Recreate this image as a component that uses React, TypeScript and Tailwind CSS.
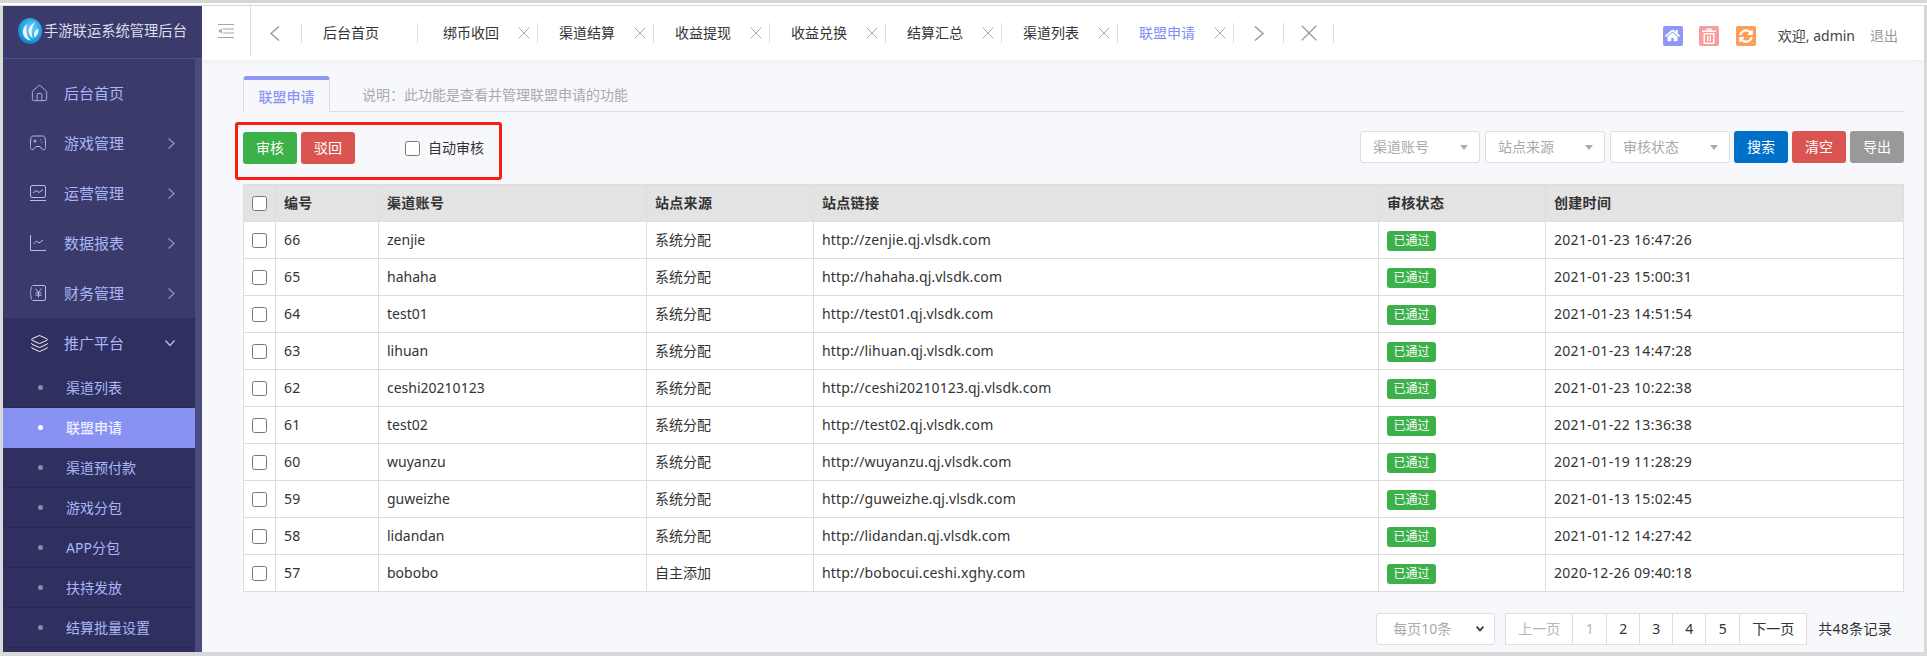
import React from "react";
import { House, Layers, X } from "lucide-react";
import { FaHome, FaSyncAlt } from "react-icons/fa";

const rows = [
  ["66", "zenjie", "系统分配", "http://zenjie.qj.vlsdk.com", "2021-01-23 16:47:26"],
  ["65", "hahaha", "系统分配", "http://hahaha.qj.vlsdk.com", "2021-01-23 15:00:31"],
  ["64", "test01", "系统分配", "http://test01.qj.vlsdk.com", "2021-01-23 14:51:54"],
  ["63", "lihuan", "系统分配", "http://lihuan.qj.vlsdk.com", "2021-01-23 14:47:28"],
  ["62", "ceshi20210123", "系统分配", "http://ceshi20210123.qj.vlsdk.com", "2021-01-23 10:22:38"],
  ["61", "test02", "系统分配", "http://test02.qj.vlsdk.com", "2021-01-22 13:36:38"],
  ["60", "wuyanzu", "系统分配", "http://wuyanzu.qj.vlsdk.com", "2021-01-19 11:28:29"],
  ["59", "guweizhe", "系统分配", "http://guweizhe.qj.vlsdk.com", "2021-01-13 15:02:45"],
  ["58", "lidandan", "系统分配", "http://lidandan.qj.vlsdk.com", "2021-01-12 14:27:42"],
  ["57", "bobobo", "自主添加", "http://bobocui.ceshi.xghy.com", "2020-12-26 09:40:18"],
];

function MonitorIcon() {
  return (
    <svg width="16" height="17" viewBox="0 0 16 17" fill="none" stroke="currentColor" strokeWidth="1">
      <rect x="0.5" y="0.5" width="15" height="12" rx="1.5" />
      <path d="M3 8 L6 5.5 L9 7.5 L13 4.5" />
      <path d="M0 15.5 H16" />
    </svg>
  );
}

function ChartIcon() {
  return (
    <svg width="16" height="16" viewBox="0 0 16 16" fill="none" stroke="currentColor" strokeWidth="1">
      <path d="M0.5 0 V15.5 H16" />
      <path d="M3.5 9 L6.5 6 L9 8 L13 5" />
    </svg>
  );
}

function YuanIcon() {
  return (
    <svg width="16" height="16" viewBox="0 0 16 16" fill="none" stroke="currentColor" strokeWidth="1">
      <path d="M2.5 0.5 H14 A1.5 1.5 0 0 1 15.5 2 V14 A1.5 1.5 0 0 1 14 15.5 H2.5" />
      <path d="M2 1.5 C0.8 1.5 1.2 7 0 8 C1.2 9 0.8 14.5 2 14.5" />
      <path d="M5.5 3.5 L8.5 7.5 L11.5 3.5 M8.5 7.5 V12.5 M5.5 8 H11.5 M5.5 10.2 H11.5" />
    </svg>
  );
}

function GameIcon() {
  return (
    <svg width="16" height="16" viewBox="0 0 16 16" fill="none" stroke="currentColor" strokeWidth="1">
      <path d="M3.5 1 H12.5 C14 1 15 2 15.2 3.5 L15.8 12 C16 14.5 13.5 15.5 12 14 L10 11.5 H6 L4 14 C2.5 15.5 0 14.5 0.2 12 L0.8 3.5 C1 2 2 1 3.5 1 Z" />
      <path d="M3.5 6 H6.5 M5 4.5 V7.5 M10 5 H11 M11.5 7.5 H12.5" strokeWidth="1.2" />
    </svg>
  );
}

function Logo() {
  return (
    <svg width="24" height="26" viewBox="0 0 24 26">
      <defs>
        <radialGradient id="logoG" cx="0.55" cy="0.4" r="0.65">
          <stop offset="0" stopColor="#6fd3f7" />
          <stop offset="0.6" stopColor="#2aa5e6" />
          <stop offset="1" stopColor="#0b76c4" />
        </radialGradient>
      </defs>
      <ellipse cx="12" cy="13" rx="12" ry="13" fill="url(#logoG)" />
      <path d="M9 6 C4 10 3.5 16 7.5 20 C9 21.5 11 22.5 13 22.5 C9 19 7.5 13 9 6 Z" fill="#eaf8ff" />
      <path d="M17.5 4 C12.5 6.5 9.5 11 11 15.5 C11.8 18 13.5 19.5 15 20.5 C13 16 13 9.5 17.5 4 Z" fill="#eaf8ff" />
      <path d="M20 10.5 C16.5 12.5 15 15.5 16.5 19.5 C19.5 17.5 21 14.5 20 10.5 Z" fill="#eaf8ff" />
    </svg>
  );
}

function Chevron({ dir, className }: { dir: "left" | "right" | "down"; className: string }) {
  if (dir === "down") {
    return (
      <svg width="10" height="7" viewBox="0 0 10 7" fill="none" stroke="currentColor" strokeWidth="1.3" className={className}>
        <path d="M0.5 0.5 L5 5.5 L9.5 0.5" />
      </svg>
    );
  }
  return (
    <svg width="7" height="11" viewBox="0 0 7 11" fill="none" stroke="currentColor" strokeWidth="1.3" className={className}>
      <path d={dir === "right" ? "M0.5 0.5 L6 5.5 L0.5 10.5" : "M6.5 0.5 L1 5.5 L6.5 10.5"} />
    </svg>
  );
}

function BigChevron({ dir }: { dir: "left" | "right" }) {
  return (
    <svg width="10" height="15" viewBox="0 0 10 15" fill="none" stroke="#999999" strokeWidth="1.5">
      <path d={dir === "right" ? "M1 0.5 L9 7.5 L1 14.5" : "M9 0.5 L1 7.5 L9 14.5"} />
    </svg>
  );
}

function TrashIcon() {
  return (
    <svg width="14" height="16" viewBox="0 0 14 16" fill="white">
      <path d="M0 2.5 H4.5 V0.5 H9.5 V2.5 H14 V4 H0 Z M5.7 1.7 V2.5 H8.3 V1.7 Z" fillRule="evenodd" />
      <path d="M1.5 5 H12.5 V15 A1 1 0 0 1 11.5 16 H2.5 A1 1 0 0 1 1.5 15 Z M3 6.5 V14.5 H11 V6.5 Z" fillRule="evenodd" />
      <path d="M5 8 H6.4 V13 H5 Z M7.6 8 H9 V13 H7.6 Z" />
    </svg>
  );
}

function MenuItem({ icon, label, chevron, active }: { icon: React.ReactNode; label: string; chevron?: boolean; active?: boolean }) {
  return (
    <div className={`flex h-[50px] shrink-0 items-center pl-[27px] text-[15px] text-[#aab6f6] ${active ? "bg-[#2f3060]" : ""}`}>
      <span className={`flex w-[34px] shrink-0 items-center ${active ? "text-white" : "text-[#b4bcf0]"}`}>{icon}</span>
      <span>{label}</span>
      {chevron && (
        <span className="ml-auto mr-[20px] flex items-center">
          {active ? <Chevron dir="down" className="text-[#b9bee6]" /> : <Chevron dir="right" className="text-[#8d92cc]" />}
        </span>
      )}
    </div>
  );
}

function SubItem({ label, active }: { label: string; active?: boolean }) {
  return (
    <div className={`flex h-10 shrink-0 items-center border-b pl-[35px] text-sm ${active ? "border-[#8792f2] bg-[#8792f2] font-medium text-[#eef0ff]" : "border-[#282a55] text-[#aab6f6]"}`}>
      <span className={`mr-[23px] h-[5px] w-[5px] rounded-full ${active ? "bg-white" : "bg-[#8a8cab]"}`} />
      <span>{label}</span>
    </div>
  );
}

function HeaderTab({ label, wide, first, active }: { label: string; wide?: boolean; first?: boolean; active?: boolean }) {
  return (
    <div className={`flex h-5 items-center border-l border-[#dddddd] text-sm ${wide ? "w-[120px] pl-[25px]" : "w-[116px] pl-[21px]"} ${active ? "text-[#7f8cf5]" : "text-[#333333]"}`}>
      <span>{label}</span>
      {!first && <X size={20} strokeWidth={1} className="ml-auto mr-[3px] text-[#999999]" />}
    </div>
  );
}

function FilterSelect({ label, w }: { label: string; w: string }) {
  return (
    <div className={`flex h-8 items-center justify-between rounded-[3px] border border-[#dddddd] bg-white pl-[12px] pr-[11px] text-sm text-[#aaaaaa] ${w}`}>
      <span>{label}</span>
      <svg width="8" height="5" viewBox="0 0 8 5"><path d="M0 0 H8 L4 5 Z" fill="#aaaaaa" /></svg>
    </div>
  );
}

function ColorButton({ label, color }: { label: string; color: string }) {
  return <button className={`h-8 w-[54px] rounded-[3px] text-sm text-white ${color}`}>{label}</button>;
}

function PageCell({ label, w, muted, last }: { label: string; w: string; muted?: boolean; last?: boolean }) {
  return (
    <div className={`flex h-full items-center justify-center text-sm ${w} ${last ? "" : "border-r border-[#dddddd]"} ${muted ? "text-[#b5b5b5]" : "text-[#333333]"}`}>
      {label}
    </div>
  );
}

const thClass = "h-[37px] border border-[#dddddd] px-2 text-left text-sm font-bold text-[#333333]";
const tdClass = "h-[37px] border border-[#dddddd] bg-white px-2 text-sm text-[#333333]";

export default function App() {
  return (
    <div className="flex h-[656px] w-[1927px] flex-col overflow-hidden bg-[#d9d9d9] font-['Noto_Sans','Noto_Sans_CJK_SC',sans-serif] tracking-[0.3px]">
      <div className="h-[3px] shrink-0 bg-[#d6d6d6]" />
      <div className="h-[2px] shrink-0 bg-white" />
      <div className="h-px shrink-0 bg-[#dddddd]" />
      <div className="flex min-h-0 flex-1 px-[3px] pb-1">
        {/* sidebar */}
        <aside className="flex h-full w-[199px] shrink-0 flex-col bg-[#3a3b6b]">
          <div className="flex h-[53px] shrink-0 items-center gap-[2px] border-b border-[#4d5199] pl-[15px] pr-1 pb-[2px] text-[14.3px] tracking-normal text-[#dcdcec]">
            <Logo />
            <span className="whitespace-nowrap">手游联运系统管理后台</span>
          </div>
          <div className="flex min-h-0 flex-1">
            <div className="flex min-w-0 flex-1 flex-col overflow-hidden pt-[9px] tracking-normal">
              <MenuItem icon={<House size={19} strokeWidth={1.1} />} label="后台首页" />
              <MenuItem icon={<GameIcon />} label="游戏管理" chevron />
              <MenuItem icon={<MonitorIcon />} label="运营管理" chevron />
              <MenuItem icon={<ChartIcon />} label="数据报表" chevron />
              <MenuItem icon={<YuanIcon />} label="财务管理" chevron />
              <MenuItem icon={<Layers size={19} strokeWidth={1.2} />} label="推广平台" chevron active />
              <div className="flex flex-1 flex-col bg-[#2f3060]">
                <SubItem label="渠道列表" />
                <SubItem label="联盟申请" active />
                <SubItem label="渠道预付款" />
                <SubItem label="游戏分包" />
                <SubItem label="APP分包" />
                <SubItem label="扶持发放" />
                <SubItem label="结算批量设置" />
              </div>
            </div>
            <div className="w-[7px] shrink-0 bg-[#4a4c80]" />
          </div>
        </aside>

        {/* main */}
        <main className="flex min-w-0 flex-1 flex-col bg-[#f7f8fb]">
          <header className="relative flex h-[54px] shrink-0 items-center bg-white tracking-normal shadow-[0_1px_6px_rgba(120,130,190,0.12)]">
            <div className="flex h-[50px] w-[49px] shrink-0 items-center justify-center self-start border-r border-[#dddddd]">
              <svg width="16" height="14" viewBox="0 0 16 14" fill="none">
                <path d="M0 0.5 H16 M5 5 H16 M5 9 H16 M0 13.5 H16" stroke="#a8a8a8" strokeWidth="1.2" />
                <path d="M0 7 L4 4.5 V9.5 Z" fill="#a8a8a8" />
              </svg>
            </div>
            <div className="flex w-[50px] shrink-0 items-center justify-center pr-[3px]">
              <BigChevron dir="left" />
            </div>
            <HeaderTab label="后台首页" first />
            <HeaderTab label="绑币收回" wide />
            <HeaderTab label="渠道结算" />
            <HeaderTab label="收益提现" />
            <HeaderTab label="收益兑换" />
            <HeaderTab label="结算汇总" />
            <HeaderTab label="渠道列表" />
            <HeaderTab label="联盟申请" active />
            <div className="flex h-5 w-[50px] shrink-0 items-center justify-center border-l border-[#dddddd]">
              <BigChevron dir="right" />
            </div>
            <div className="flex h-5 w-[51px] shrink-0 items-center justify-center border-x border-[#dddddd] text-[#999999]">
              <X size={28} strokeWidth={1} />
            </div>
            <div className="ml-auto mt-[5px] flex items-center pr-[26px] text-sm">
              <span className="flex h-5 w-5 items-center justify-center rounded-[2px] bg-[#8f97f4] text-white"><FaHome size={15} /></span>
              <span className="ml-4 flex h-5 w-5 items-center justify-center rounded-[2px] bg-[#fb9c9c]"><TrashIcon /></span>
              <span className="ml-[17px] flex h-5 w-5 items-center justify-center rounded-[2px] bg-[#fd9d57] text-white"><FaSyncAlt size={14} /></span>
              <span className="ml-[22px] whitespace-nowrap text-[#444444]">欢迎, admin</span>
              <span className="ml-[15px] whitespace-nowrap text-[#999999]">退出</span>
            </div>
          </header>

          <div className="flex min-h-0 flex-1 flex-col pl-[41px] pr-[20px] pt-4">
            {/* tabs */}
            <div className="flex h-[36px] shrink-0 items-start border-b border-[#dddddd] tracking-normal">
              <div className="-mb-px flex h-[37px] w-[87px] items-center justify-center rounded-t-[4px] border-x border-t-4 border-x-[#dddddd] border-t-[#8f97f4] bg-[#f7f8fb] pt-[1px] text-sm font-medium text-[#8c97f5]">
                联盟申请
              </div>
              <span className="ml-8 mt-[9px] text-sm text-[#aaaaaa]">说明：此功能是查看并管理联盟申请的功能</span>
            </div>

            {/* toolbar */}
            <div className="relative mt-[19px] flex h-[33px] shrink-0 items-start justify-between tracking-normal">
              <div className="mt-px flex items-center">
                <ColorButton label="审核" color="bg-[#3cb049]" />
                <span className="ml-1"><ColorButton label="驳回" color="bg-[#da5551]" /></span>
                <label className="ml-[50px] flex items-center gap-2 text-sm text-[#333333]">
                  <input type="checkbox" className="h-[15px] w-[15px]" />
                  <span>自动审核</span>
                </label>
              </div>
              <div className="flex items-center">
                <FilterSelect label="渠道账号" w="w-[120px]" />
                <span className="ml-[5px]"><FilterSelect label="站点来源" w="w-[120px]" /></span>
                <span className="ml-[5px]"><FilterSelect label="审核状态" w="w-[120px]" /></span>
                <span className="ml-1"><ColorButton label="搜索" color="bg-[#006fc7]" /></span>
                <span className="ml-1"><ColorButton label="清空" color="bg-[#da5551]" /></span>
                <span className="ml-1"><ColorButton label="导出" color="bg-[#999999]" /></span>
              </div>
              <div className="pointer-events-none absolute left-[-8px] top-[-9px] h-[58px] w-[267px] rounded-[3px] border-[3px] border-[#fa1e12]" />
            </div>

            {/* table */}
            <table className="mt-[20px] w-[1660px] table-fixed border-collapse">
              <colgroup>
                <col className="w-[32px]" />
                <col className="w-[103px]" />
                <col className="w-[268px]" />
                <col className="w-[167px]" />
                <col className="w-[565px]" />
                <col className="w-[167px]" />
                <col className="w-[358px]" />
              </colgroup>
              <thead>
                <tr className="bg-[#e3e3e3]">
                  <th className={thClass + " !px-0 text-center"}>
                    <input type="checkbox" className="block mx-auto h-[15px] w-[15px]" />
                  </th>
                  <th className={thClass}>编号</th>
                  <th className={thClass}>渠道账号</th>
                  <th className={thClass}>站点来源</th>
                  <th className={thClass}>站点链接</th>
                  <th className={thClass}>审核状态</th>
                  <th className={thClass}>创建时间</th>
                </tr>
              </thead>
              <tbody>
                {rows.map((r) => (
                  <tr key={r[0]}>
                    <td className={tdClass + " !px-0"}>
                      <input type="checkbox" className="block mx-auto h-[15px] w-[15px]" />
                    </td>
                    <td className={tdClass}>{r[0]}</td>
                    <td className={tdClass + " tracking-normal"}>{r[1]}</td>
                    <td className={tdClass + " tracking-normal"}>{r[2]}</td>
                    <td className={tdClass + " tracking-[0.15px]"}>{r[3]}</td>
                    <td className={tdClass}>
                      <span className="inline-flex h-5 w-[49px] items-center justify-center rounded-[3px] bg-[#3cb049] align-middle text-xs tracking-normal text-white">已通过</span>
                    </td>
                    <td className={tdClass}>{r[4]}</td>
                  </tr>
                ))}
              </tbody>
            </table>

            {/* pagination */}
            <div className="mt-[21px] flex h-8 shrink-0 items-center justify-end pr-3 tracking-normal">
              <div className="relative h-8 w-[119px]">
                <select defaultValue="10" className="h-8 w-full appearance-none rounded-[3px] border border-[#dddddd] bg-white pl-[16px] text-sm text-[#aaaaaa]">
                  <option value="10">每页10条</option>
                  <option value="20">每页20条</option>
                </select>
                <svg width="8" height="6" viewBox="0 0 8 6" fill="none" stroke="#333333" strokeWidth="1.8" className="pointer-events-none absolute right-[11px] top-[13px]">
                  <path d="M0.7 0.7 L4 4.5 L7.3 0.7" />
                </svg>
              </div>
              <div className="ml-[10px] flex h-8 items-center border border-[#dddddd] bg-white">
                <PageCell label="上一页" w="w-[67px]" muted />
                <PageCell label="1" w="w-[34px]" muted />
                <PageCell label="2" w="w-[33px]" />
                <PageCell label="3" w="w-[33px]" />
                <PageCell label="4" w="w-[33px]" />
                <PageCell label="5" w="w-[34px]" />
                <PageCell label="下一页" w="w-[66px]" last />
              </div>
              <span className="ml-[11px] whitespace-nowrap text-sm tracking-[0.3px] text-[#333333]">共48条记录</span>
            </div>
          </div>
        </main>
      </div>
    </div>
  );
}
